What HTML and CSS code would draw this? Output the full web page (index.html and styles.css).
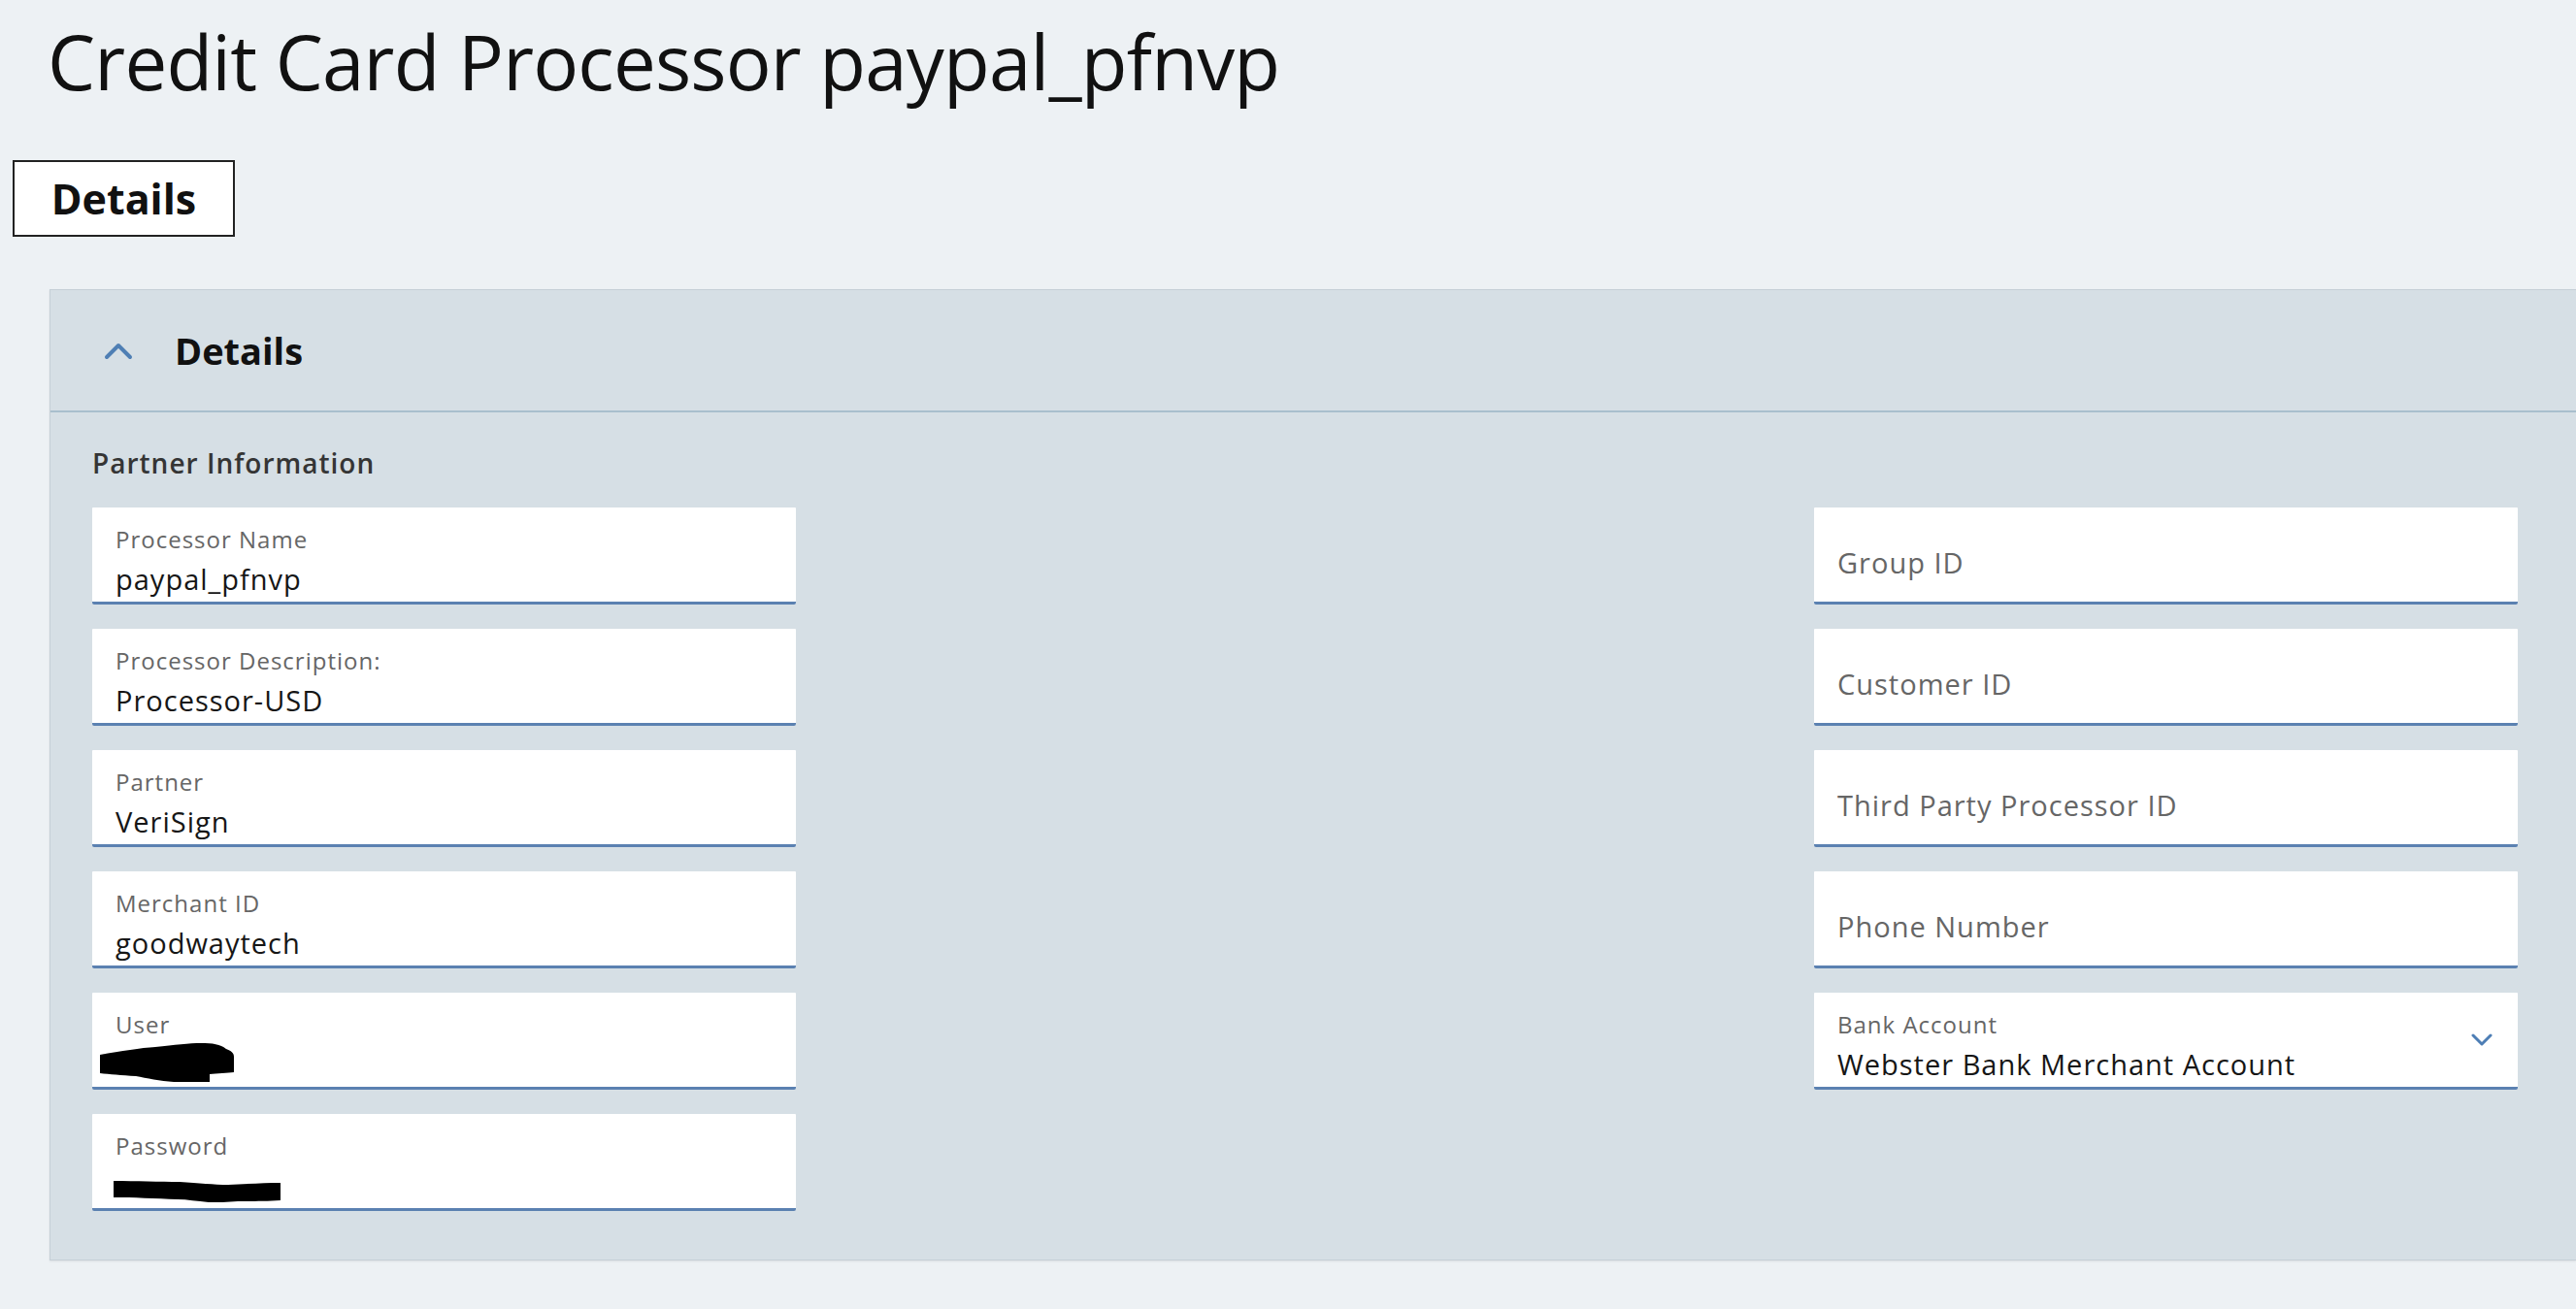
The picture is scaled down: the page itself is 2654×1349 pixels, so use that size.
FILE: index.html
```html
<!DOCTYPE html>
<html lang="en">
<head>
<meta charset="utf-8">
<title>Credit Card Processor paypal_pfnvp</title>
<link rel="stylesheet" href="styles.css">
</head>
<body>
<main class="page">
  <h1 class="title">Credit Card Processor paypal_pfnvp</h1>
  <div class="tabs">
    <div class="tab">Details</div>
  </div>
  <section class="panel">
    <header class="panel-head">
      <svg class="chev-up" width="30" height="19" viewBox="0 0 30 19"><polyline points="3,16 15,4 27,16" fill="none" stroke="#4f7fb4" stroke-width="4" stroke-linecap="round" stroke-linejoin="round"/></svg>
      <h2 class="panel-title">Details</h2>
    </header>
    <div class="panel-body">
      <h3 class="group-title">Partner Information</h3>
      <div class="grid">
        <div class="col">
          <div class="field">
            <div class="label">Processor Name</div>
            <div class="value">paypal_pfnvp</div>
          </div>
          <div class="field">
            <div class="label">Processor Description:</div>
            <div class="value">Processor-USD</div>
          </div>
          <div class="field">
            <div class="label">Partner</div>
            <div class="value">VeriSign</div>
          </div>
          <div class="field">
            <div class="label">Merchant ID</div>
            <div class="value">goodwaytech</div>
          </div>
          <div class="field">
            <div class="label">User</div>
            <div class="value"></div>
            <svg class="redact" width="200" height="100" viewBox="0 0 200 100"><path d="M8,64 C30,60 50,57 65,56 C85,54 100,52 112,52 C124,52 132,53 138,58 C143,60 146,62 146,66 L146,82 C140,83 128,83 121,84 L121,92 C110,92 95,92 84,92 C70,91 56,88 45,86 C30,85 18,84 8,83 Z" fill="#000"/></svg>
          </div>
          <div class="field">
            <div class="label">Password</div>
            <div class="value"></div>
            <svg class="redact" width="200" height="100" viewBox="0 0 200 100"><path d="M22,69 C45,69 70,70 90,70 C110,71 125,73 140,73 C160,72 178,71 194,71 L194,89 C178,90 160,90 150,90 C140,91 128,91 120,91 C108,90 98,88 88,88 C65,87 42,86 22,86 Z" fill="#000"/></svg>
          </div>
        </div>
        <div class="col">
          <div class="field">
            <div class="placeholder">Group ID</div>
          </div>
          <div class="field">
            <div class="placeholder">Customer ID</div>
          </div>
          <div class="field">
            <div class="placeholder">Third Party Processor ID</div>
          </div>
          <div class="field">
            <div class="placeholder">Phone Number</div>
          </div>
          <div class="field field-select">
            <div class="select-text">
              <div class="label">Bank Account</div>
              <div class="value">Webster Bank Merchant Account</div>
            </div>
            <svg class="chev-down" width="22" height="13" viewBox="0 0 22 13"><polyline points="2,2 11,11 20,2" fill="none" stroke="#4d7eb5" stroke-width="3" stroke-linecap="round" stroke-linejoin="round"/></svg>
          </div>
        </div>
      </div>
    </div>
  </section>
</main>
</body>
</html>
```

FILE: styles.css
```css
html, body {
  margin: 0;
  padding: 0;
}

body {
  background: #edf1f4;
  font-family: "Open Sans", "Noto Sans", sans-serif;
  color: #111;
  overflow: hidden;
}

.page {
  width: 2654px;
  height: 1349px;
}

.title {
  margin: 0;
  padding: 13px 0 0 49px;
  font-size: 78px;
  font-weight: 400;
  line-height: 100px;
  letter-spacing: -0.8px;
  color: #111;
}

.tabs {
  margin-top: 52px;
  padding-left: 13px;
}

.tab {
  width: 229px;
  height: 79px;
  box-sizing: border-box;
  border: 2px solid #222;
  background: #fff;
  padding-top: 8px;
  font-size: 43px;
  font-weight: 700;
  line-height: 59px;
  text-align: center;
  color: #111;
}

.panel {
  margin: 54px 0 0 51px;
  height: 1001px;
  box-sizing: border-box;
  background: #d6dfe5;
  border: 1px solid #c5cfd6;
  border-right: none;
  box-shadow: 0 1px 2px rgba(0, 0, 0, 0.08);
}

.panel-head {
  height: 124px;
  border-bottom: 2px solid #a9bfcd;
  display: flex;
  align-items: center;
  padding-left: 55px;
}

.chev-up {
  display: block;
  flex: none;
}

.panel-title {
  margin: 0 0 0 43px;
  font-size: 38px;
  font-weight: 700;
  line-height: 39px;
  color: #111;
}

.panel-body {
  padding: 33px 60px 0 43px;
}

.group-title {
  margin: 0;
  font-size: 28px;
  font-weight: 600;
  line-height: 38px;
  letter-spacing: 1px;
  color: #353535;
}

.grid {
  display: flex;
  justify-content: space-between;
  margin-top: 27px;
}

.col {
  width: 725px;
  display: flex;
  flex-direction: column;
  gap: 25px;
}

.field {
  position: relative;
  height: 100px;
  box-sizing: border-box;
  background: #fff;
  border-bottom: 3px solid #5b81b1;
  border-radius: 1px 1px 2px 2px;
  padding: 17px 26px 0 24px;
}

.label {
  font-size: 24px;
  line-height: 32px;
  letter-spacing: 1px;
  color: #666;
}

.value {
  margin-top: 6px;
  height: 38px;
  font-size: 29px;
  line-height: 38px;
  letter-spacing: 1px;
  color: #161616;
}

.placeholder {
  margin-top: 21px;
  font-size: 29px;
  line-height: 38px;
  letter-spacing: 1px;
  color: #666;
}

.field-select {
  display: flex;
  align-items: flex-start;
}

.select-text {
  flex: 1;
}

.chev-down {
  display: block;
  flex: none;
  align-self: center;
  margin-top: -17px;
}

.redact {
  position: absolute;
  left: 0;
  top: 0;
}
```
